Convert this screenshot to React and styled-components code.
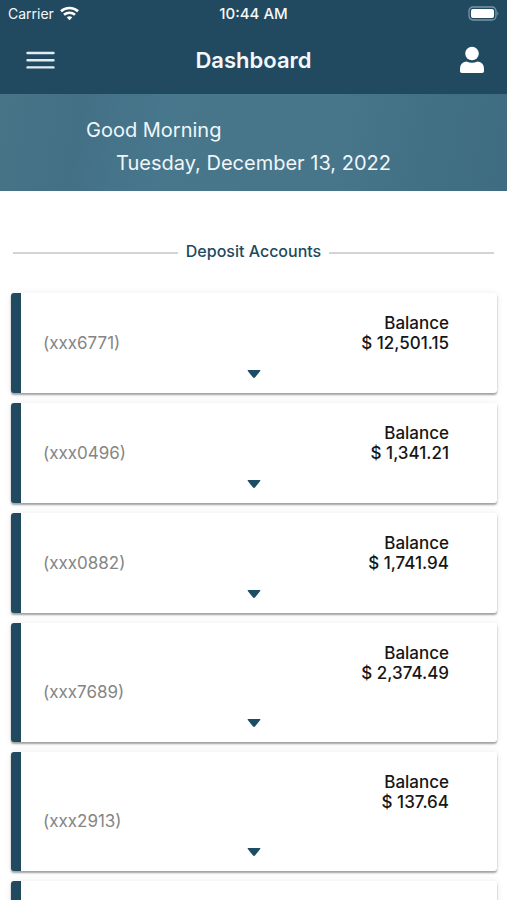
import React, { useState } from "react";
import styled, { createGlobalStyle } from "styled-components";

const GlobalStyle = createGlobalStyle`
  * {
    box-sizing: border-box;
  }
  body {
    margin: 0;
    background: #fff;
    font-family: Inter, "Liberation Sans", sans-serif;
  }
`;

const Screen = styled.div`
  display: flex;
  flex-direction: column;
  height: 100vh;
  overflow: hidden;
`;

const Header = styled.header`
  flex: none;
  background: #214a60;
  color: #f4f8fa;
`;

const StatusBar = styled.div`
  display: grid;
  grid-template-columns: 1fr auto 1fr;
  align-items: center;
  height: 26px;
  padding: 0 8px;
  font-size: 14px;
`;

const Carrier = styled.div`
  display: flex;
  align-items: center;
  gap: 6px;
`;

const Time = styled.span`
  font-size: 15px;
  font-weight: 500;
`;

const Battery = styled.svg`
  justify-self: end;
`;

const NavBar = styled.div`
  display: grid;
  grid-template-columns: 1fr auto 1fr;
  align-items: center;
  height: 68px;
  padding: 0 22px;
`;

const Title = styled.h1`
  margin: 0;
  font-size: 22px;
  line-height: 28px;
  font-weight: 600;
`;

const IconButton = styled.button`
  display: flex;
  justify-self: ${(props) => (props.$end ? "end" : "start")};
  padding: ${(props) => (props.$end ? "0" : "0 4px")};
  border: 0;
  background: none;
  color: inherit;
  cursor: pointer;
`;

const Banner = styled.section`
  flex: none;
  padding: 20px 24px 11px;
  background: linear-gradient(
    100deg,
    #487488 0%,
    #447086 16%,
    #47778c 32%,
    #47758a 66%,
    #416f84 84%,
    #3f6c80 100%
  );
  color: #f0f6f9;
  font-size: 20px;
  line-height: 33px;
  p {
    margin: 0;
  }
`;

const Greeting = styled.p`
  padding-left: 62px;
`;

const Today = styled.p`
  text-align: center;
`;

const Content = styled.main`
  flex: 1;
  min-height: 0;
  padding: 50px 10px 0 11px;
  overflow-y: auto;
  scrollbar-width: none;
`;

const SectionTitle = styled.h2`
  display: flex;
  align-items: center;
  gap: 8px;
  margin: 0 3px 32px 2px;
  color: #214a60;
  font-size: 16px;
  line-height: 20px;
  font-weight: 500;
  &::before,
  &::after {
    content: "";
    flex: 1;
    height: 2px;
    margin-top: 3px;
    background: #d3d3d3;
  }
`;

const Cards = styled.ul`
  display: flex;
  flex-direction: column;
  gap: 10px;
  margin: 0;
  padding: 0 0 10px;
  list-style: none;
`;

const Card = styled.li`
  padding: 20px 48px 10px 22px;
  border-left: 10px solid #214a60;
  border-radius: 3px;
  background: #fff;
  box-shadow: 0 2px 2px rgba(0, 0, 0, 0.35), 0 0 7px rgba(0, 0, 0, 0.08);
`;

const Summary = styled.div`
  display: flex;
  justify-content: space-between;
  min-height: ${(props) => (props.$tall ? "59px" : "40px")};
  font-size: 17px;
  line-height: 20px;
`;

const Number = styled.span`
  align-self: flex-end;
  color: #858585;
`;

const Balance = styled.div`
  color: #161616;
  font-weight: 500;
  text-align: right;
`;

const Toggle = styled.button`
  display: flex;
  justify-content: center;
  width: 100%;
  height: 30px;
  padding: 16px 0 0 16px;
  border: 0;
  background: none;
  cursor: pointer;
  svg {
    transform: ${(props) => (props.$open ? "rotate(180deg)" : "none")};
  }
`;

const accounts = [
  { number: "(xxx6771)", balance: "$ 12,501.15" },
  { number: "(xxx0496)", balance: "$ 1,341.21" },
  { number: "(xxx0882)", balance: "$ 1,741.94" },
  { number: "(xxx7689)", balance: "$ 2,374.49", tall: true },
  { number: "(xxx2913)", balance: "$ 137.64", tall: true },
  { number: "", balance: "" },
];

const Account = ({ account }) => {
  const [open, setOpen] = useState(false);

  return (
    <Card>
      <Summary $tall={account.tall}>
        <Number>{account.number}</Number>
        {account.balance && (
          <Balance>
            <div>Balance</div>
            <div>{account.balance}</div>
          </Balance>
        )}
      </Summary>
      <Toggle
        $open={open}
        aria-label="Account details"
        aria-expanded={open}
        onClick={() => setOpen(!open)}
      >
        <svg width="14" height="10" viewBox="0 0 14 10">
          <path
            d="M1.2 1h11.6q1 .2.4 1.1L8 8.6q-1 .9-2 0L.8 2.1Q.2 1.2 1.2 1z"
            fill="#1d4d64"
          />
        </svg>
      </Toggle>
    </Card>
  );
};

const App = () => (
  <Screen>
    <GlobalStyle />
    <Header>
      <StatusBar>
        <Carrier>
          <span>Carrier</span>
          <svg width="19" height="15" viewBox="0 0 19 15" fill="none" stroke="#fff" strokeWidth="2.6">
            <path d="M1 5.3C5.7.9 13.3.9 18 5.3" />
            <path d="M4 8.8C7.2 6 11.8 6 15 8.8" />
            <path d="M6.7 11.3Q9.500 9 12.300 11.3L9.500 14.2z" fill="#fff" stroke="none" />
          </svg>
        </Carrier>
        <Time>10:44 AM</Time>
        <Battery width="31" height="15" viewBox="0 0 31 15">
          <rect x="1" y="1" width="27" height="13" rx="4" fill="none" stroke="#7d96a4" strokeWidth="1.3" />
          <rect x="3" y="3" width="23" height="9" rx="2" fill="#fff" />
          <path d="M29.3 5.5q2 2 0 4z" fill="#7d96a4" />
        </Battery>
      </StatusBar>
      <NavBar>
        <IconButton aria-label="Menu">
          <svg width="29" height="20" viewBox="0 0 29 20" stroke="#e2edf2" strokeWidth="2.4" strokeLinecap="round">
            <path d="M1.5 3h26M1.5 10.2h26M1.5 17.4h26" />
          </svg>
        </IconButton>
        <Title>Dashboard</Title>
        <IconButton $end aria-label="Profile">
          <svg width="26" height="28" viewBox="0 0 26 28" fill="#fff">
            <circle cx="13" cy="7.5" r="6.8" />
            <path d="M7.5 15.500Q13 18 18.500 15.500Q25 16 25 23v2.200q0 1.800-1.800 1.800H2.800Q1 27 1 25.200V23Q1 16 7.500 15.500z" />
          </svg>
        </IconButton>
      </NavBar>
    </Header>
    <Banner>
      <Greeting>Good Morning</Greeting>
      <Today>Tuesday, December 13, 2022</Today>
    </Banner>
    <Content>
      <SectionTitle>Deposit Accounts</SectionTitle>
      <Cards>
        {accounts.map((account, index) => (
          <Account key={index} account={account} />
        ))}
      </Cards>
    </Content>
  </Screen>
);

export default App;
